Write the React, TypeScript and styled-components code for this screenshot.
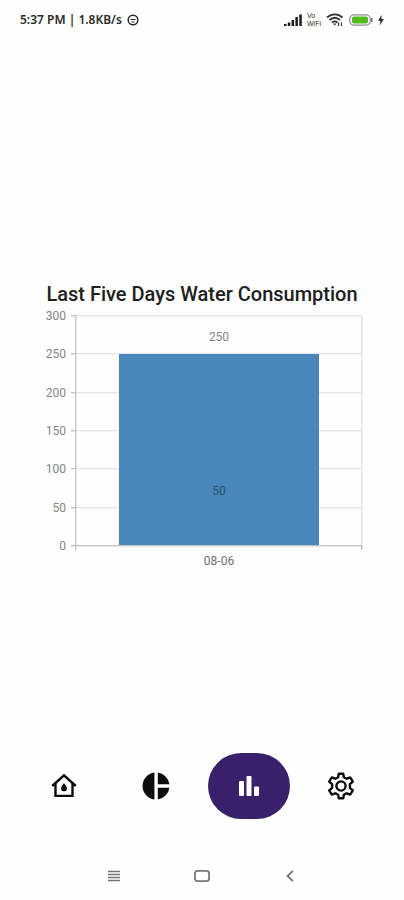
import React from "react";
import styled, { createGlobalStyle } from "styled-components";

const GlobalStyle = createGlobalStyle`
  *, *::before, *::after { box-sizing: border-box; }
  body { margin: 0; background: #fefefe; font-family: Roboto, sans-serif; }
`;

const Screen = styled.div`
  min-height: 100vh;
  display: flex;
  flex-direction: column;
`;

const StatusBar = styled.header`
  height: 40px;
  padding: 0 20px;
  display: flex;
  align-items: center;
  justify-content: space-between;
  color: #2a2a2a;
  font: 600 12px/16px "Noto Sans", sans-serif;
`;

const StatusGroup = styled.div`
  display: flex;
  align-items: center;
  gap: 5px;
`;

const CallingLabel = styled.span`
  display: flex;
  flex-direction: column;
  font: 500 7px/8px "Liberation Sans", sans-serif;
`;

const Main = styled.main`
  flex: 1;
  display: flex;
  flex-direction: column;
  justify-content: center;
  padding: 64px 32px 0;
`;

const Title = styled.h1`
  margin: 0;
  color: #202020;
  font-size: 20px;
  line-height: 24px;
  font-weight: 500;
  text-align: center;
  white-space: nowrap;
`;

const ChartSvg = styled.svg`
  display: block;
  width: 100%;
  height: auto;
  font-family: Roboto, sans-serif;
  font-size: 12px;
`;

const TabBar = styled.nav`
  display: grid;
  grid-template-columns: repeat(4, 1fr);
  justify-items: center;
  padding: 0 17px 0 18px;
`;

const Tab = styled.button<{ $active?: boolean }>`
  display: flex;
  align-items: center;
  justify-content: center;
  width: 82px;
  height: 66px;
  padding: 0;
  border: 0;
  border-radius: 33px;
  color: ${({ $active }) => ($active ? "#fff" : "#0c0c0c")};
  background: ${({ $active }) => ($active ? "#38206b" : "transparent")};
  cursor: pointer;
`;

const SystemBar = styled.footer`
  display: flex;
  justify-content: center;
  gap: 40px;
  padding: 33px 0 0;
  height: 81px;
`;

const SystemButton = styled.button`
  display: flex;
  align-items: center;
  justify-content: center;
  width: 48px;
  height: 48px;
  padding: 0;
  border: 0;
  background: transparent;
  color: #757575;
`;

const PLOT = { left: 44, right: 330, top: 10, bottom: 240 };
const MAX = 300;
const TICKS = [0, 50, 100, 150, 200, 250, 300];
const DAYS = [{ label: "08-06", total: 250, latest: 50 }];

const yOf = (value: number) =>
  Math.round(PLOT.bottom - (value / MAX) * (PLOT.bottom - PLOT.top));

function WaterChart() {
  const slot = (PLOT.right - PLOT.left) / DAYS.length;
  const barWidth = Math.round(slot * 0.7);
  return (
    <ChartSvg viewBox="0 0 340 270" role="img" aria-label="Water consumption by day">
      {TICKS.map((tick) => (
        <g key={tick}>
          <rect x={PLOT.left} y={yOf(tick) - 1} width={PLOT.right - PLOT.left} height="1.4" fill={tick === 0 ? "#c2c2c2" : "#e6e6e6"} />
          <rect x={PLOT.left - 5} y={yOf(tick) - 1} width="5" height="1.4" fill="#c2c2c2" />
          <text x={PLOT.left - 10} y={yOf(tick) + 4} textAnchor="end" fill="#858585">{tick}</text>
        </g>
      ))}
      <rect x={PLOT.left - 1} y={PLOT.top - 1} width="1.4" height="235" fill="#c8c8c8" />
      <rect x={PLOT.right - 1} y={PLOT.top - 1} width="1.4" height="230" fill="#e6e6e6" />
      <rect x={PLOT.right - 1} y={PLOT.bottom - 1} width="1.4" height="5" fill="#b4b4b4" />
      {DAYS.map((day, index) => {
        const center = PLOT.left + slot * (index + 0.5);
        return (
          <g key={day.label} textAnchor="middle">
            <rect x={center - barWidth / 2} y={yOf(day.total)} width={barWidth} height={PLOT.bottom - yOf(day.total) - 1} fill="#4986b9" />
            <text x={center} y={yOf(day.total) - 13} fill="#858585">{day.total}</text>
            <text x={center} y={yOf(day.latest) - 13} fill="#285273">{day.latest}</text>
            <text x={center} y={PLOT.bottom + 19} fill="#707070">{day.label}</text>
          </g>
        );
      })}
    </ChartSvg>
  );
}

const FaceIcon = () => (
  <svg width="12" height="12" viewBox="0 0 12 12" fill="none" stroke="currentColor">
    <circle cx="6" cy="6" r="4.8" strokeWidth="1.5" />
    <path d="M3.5 5.5h5M4.5 8h3" strokeWidth="1" />
  </svg>
);

const SignalIcon = () => (
  <svg width="18" height="12" viewBox="0 0 18 12" fill="#1c1c1c">
    <path d="M0 10h2.500v2H0zM3.800 8.500h2.500V12H3.800zM7.600 6h2.500v6H7.600zM11.400 3h2.500v9h-2.500zM15.300 0.500h2.500V12h-2.500z" />
  </svg>
);

const WifiIcon = () => (
  <svg width="18" height="14" viewBox="0 0 18 14" fill="none" stroke="#333">
    <path d="M1 4.500C5.500 .3 12 .3 16.500 4.500M3.500 7C7 4 10.500 4 14 7M6 9.500c2-1.600 3.500-1.600 5.500 0" strokeWidth="1.8" />
    <path d="M7 10.500l1.800 2 1.800-2z" fill="#333" stroke="none" />
    <path d="M12.500 13v-3.500M15.500 9.500V13" strokeWidth="1.200" />
  </svg>
);

const BatteryIcon = () => (
  <svg width="24" height="12" viewBox="0 0 24 12">
    <rect x=".7" y=".9" width="20.600" height="10.200" rx="4" fill="#fff" stroke="#8c8c8c" strokeWidth="1.200" />
    <rect x="3" y="2.500" width="16" height="7" rx="2" fill="#52b81c" />
    <path d="M22.800 4v4" stroke="#666" strokeWidth="1.300" />
  </svg>
);

const BoltIcon = () => (
  <svg width="6" height="12" viewBox="0 0 6 12" fill="#222">
    <path d="M3.600 .8L.2 6.800h2.300L1.800 11.400 5.800 5H3.300z" />
  </svg>
);

const HomeIcon = () => (
  <svg width="26" height="26" viewBox="0 0 26 26" fill="none" stroke="currentColor">
    <path d="M1.200 13L13 2.300 24.800 13" strokeWidth="2.400" />
    <path d="M4.500 10.500V22.900h17V10.500" strokeWidth="2.400" />
    <path d="M13 10c1.900 2.400 2.900 4 2.900 5.400a2.900 2.900 0 0 1-5.800 0c0-1.400 1-3 2.900-5.400z" fill="currentColor" stroke="none" />
  </svg>
);

const PieIcon = () => (
  <svg width="28" height="28" viewBox="0 0 28 28" fill="currentColor">
    <path d="M12.400.6v26.800A13.500 13.500 0 0 1 12.400.6zM15.800.6A13.500 13.500 0 0 1 27.400 12.300H15.800zM15.800 15.700h11.600A13.500 13.500 0 0 1 15.800 27.400z" />
  </svg>
);

const BarsIcon = () => (
  <svg width="22" height="22" viewBox="0 0 22 22" fill="currentColor">
    <rect x="1" y="6" width="5" height="15" rx="1" />
    <rect x="8.500" y="1" width="5" height="20" rx="1" />
    <rect x="16" y="11.500" width="5" height="9.500" rx="1" />
  </svg>
);

const GearIcon = () => (
  <svg width="28" height="28" viewBox="0 0 28 28" fill="none" stroke="currentColor" strokeWidth="2.400" strokeLinejoin="round">
    <path d="M11.800 1.700h4.400l.7 3.500 2.700 1.500 3.700-1.200 2.500 4.100-2.900 2.600v3.600l2.900 2.600-2.500 4.100-3.700-1.200-2.700 1.500-.7 3.500h-4.400l-.7-3.500-2.700-1.500-3.700 1.200-2.500-4.100 2.900-2.600v-3.600L2.200 9.600l2.500-4.100 3.700 1.200 2.700-1.500z" />
    <circle cx="14" cy="14" r="4.600" />
  </svg>
);

export default function App() {
  return (
    <Screen>
      <GlobalStyle />
      <StatusBar>
        <StatusGroup>
          <span>5:37 PM | 1.8KB/s</span>
          <FaceIcon />
        </StatusGroup>
        <StatusGroup>
          <SignalIcon />
          <CallingLabel>
            <span>Vo</span>
            <span>WiFi</span>
          </CallingLabel>
          <WifiIcon />
          <BatteryIcon />
          <BoltIcon />
        </StatusGroup>
      </StatusBar>
      <Main>
        <Title>Last Five Days Water Consumption</Title>
        <WaterChart />
      </Main>
      <TabBar aria-label="Main">
        <Tab aria-label="Home"><HomeIcon /></Tab>
        <Tab aria-label="Breakdown"><PieIcon /></Tab>
        <Tab $active aria-label="Statistics" aria-current="page"><BarsIcon /></Tab>
        <Tab aria-label="Settings"><GearIcon /></Tab>
      </TabBar>
      <SystemBar>
        <SystemButton aria-label="Recent apps">
          <svg width="12" height="12" viewBox="0 0 12 12" stroke="currentColor" strokeWidth="1.400">
            <path d="M0 1.500h12M0 4.500h12M0 7.500h12M0 10.500h12" />
          </svg>
        </SystemButton>
        <SystemButton aria-label="Home screen">
          <svg width="16" height="12" viewBox="0 0 16 12" fill="none" stroke="currentColor" strokeWidth="1.800">
            <rect x=".9" y=".9" width="14.200" height="10.200" rx="2.500" />
          </svg>
        </SystemButton>
        <SystemButton aria-label="Back">
          <svg width="8" height="12" viewBox="0 0 8 12" fill="none" stroke="currentColor" strokeWidth="1.800">
            <path d="M7 .8L1.500 6 7 11.200" />
          </svg>
        </SystemButton>
      </SystemBar>
    </Screen>
  );
}
